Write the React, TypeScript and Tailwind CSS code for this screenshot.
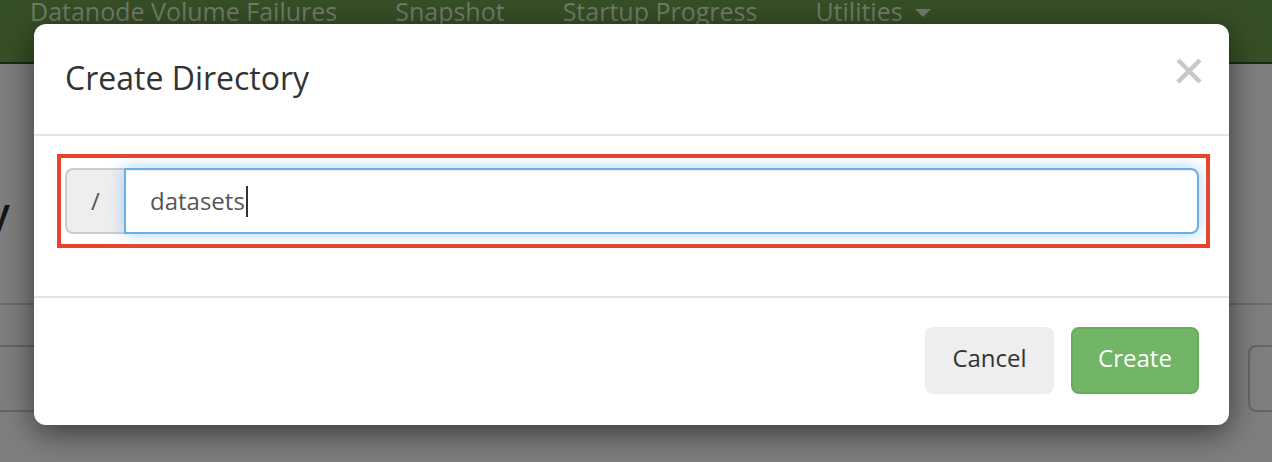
const navItems = ["Datanode Volume Failures", "Snapshot", "Startup Progress"];

function App() {
  return (
    <div className="relative w-[1272px] h-[462px] overflow-hidden bg-[#7f7f7f] font-['Open_Sans',sans-serif]">
      {/* page underneath the backdrop */}
      <nav className="h-[64px] bg-[#374f26] border-b-2 border-[#1c2a13] overflow-hidden">
        <div className="flex items-center gap-[58px] pl-[30px] -mt-[3px] text-[25px] leading-[28px] text-[#717c69]">
          {navItems.map((item) => (
            <span key={item} className="whitespace-nowrap">
              {item}
            </span>
          ))}
          <span className="flex items-center whitespace-nowrap">
            Utilities
            <span className="ml-[12px] mt-[4px] w-0 h-0 border-x-[8px] border-x-transparent border-t-[8px] border-t-[#717c69]"></span>
          </span>
        </div>
      </nav>

      <div className="h-[239px] pt-[124px]">
        <div className="w-[10px] overflow-hidden flex justify-end">
          <h1 className="whitespace-nowrap text-[40px] leading-[48px] font-semibold text-[#161616]">
            Browse Directory
          </h1>
        </div>
      </div>
      <div className="border-t-2 border-[#6c6c6c]"></div>
      <div className="mt-[40px] h-[67px] flex justify-between">
        <div className="w-[300px] border-y-2 border-[#666666]"></div>
        <div className="w-[60px] -mr-[36px] border-2 border-[#666666] rounded-[8px]"></div>
      </div>

      {/* modal */}
      <div className="absolute left-[34px] top-[24px] w-[1195px] bg-white rounded-[12px] shadow-[0_8px_32px_rgba(0,0,0,0.55)]">
        <div className="h-[112px] flex justify-between pl-[31px] pr-[26px] border-b-2 border-[#e5e5e5]">
          <h4 className="self-center -mt-[2px] text-[32px] text-[#333333]">Create Directory</h4>
          <button className="self-start mt-[33px]">
            <svg width="28" height="28" viewBox="0 0 28 28">
              <path d="M3 3L25 25M25 3L3 25" stroke="#c8c8c8" strokeWidth="4.5" />
            </svg>
          </button>
        </div>

        <div className="h-[162px] pt-[18px] pl-[23px] pr-[19px] border-b-2 border-[#e5e5e5]">
          <div className="border-4 border-[#e8442b] pt-[10px] pb-[10px] pl-[4px] pr-[7px]">
            <div className="flex h-[66px]">
              <span className="w-[59px] flex items-center justify-center bg-[#eeeeee] border-2 border-r-0 border-[#cccccc] rounded-l-[8px] text-[24px] text-[#555555]">
                /
              </span>
              <div className="flex-1 flex items-center pl-[24px] border-2 border-[#66afe9] rounded-r-[8px] shadow-[inset_0_1px_1px_rgba(0,0,0,0.075),0_0_16px_rgba(102,175,233,0.55)] text-[24px] text-[#555555]">
                <span>datasets</span>
                <span className="ml-[1px] w-[2px] h-[31px] bg-[#333333]"></span>
              </div>
            </div>
          </div>
        </div>

        <div className="h-[127px] flex justify-end gap-[17px] pt-[29px] pr-[30px]">
          <button className="w-[129px] h-[67px] pb-[5px] bg-[#eeeeee] rounded-[8px] text-[24px] text-[#333333]">
            Cancel
          </button>
          <button className="w-[128px] h-[67px] pb-[5px] bg-[#72b566] border-2 border-[#66ac5a] rounded-[8px] text-[24px] text-white">
            Create
          </button>
        </div>
      </div>
    </div>
  );
}

export default App;
